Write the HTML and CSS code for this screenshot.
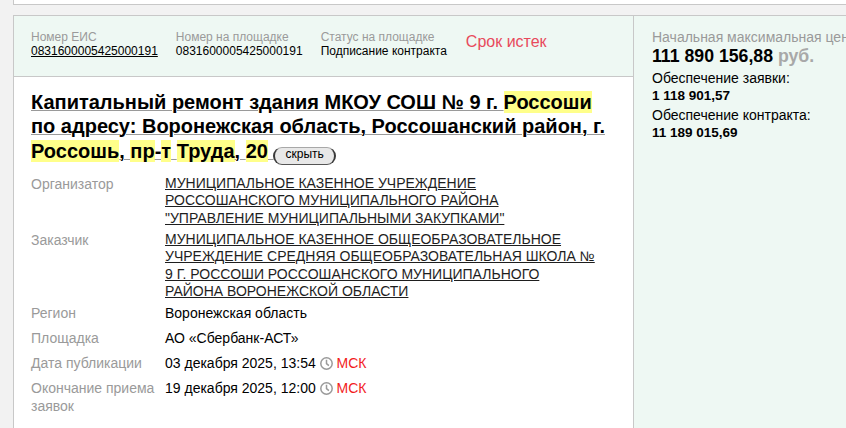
FILE: index.html
```html
<!DOCTYPE html>
<html lang="ru">
<head>
<meta charset="utf-8">
<title>Закупка 0831600005425000191</title>
<link rel="stylesheet" href="styles.css">
</head>
<body>
<div class="page">
  <div class="prev-card"></div>
  <div class="card">
    <div class="main">
      <div class="head">
        <div class="head-item">
          <div class="head-label">Номер ЕИС</div>
          <a class="head-value head-link" href="#">0831600005425000191</a>
        </div>
        <div class="head-item">
          <div class="head-label">Номер на площадке</div>
          <div class="head-value">0831600005425000191</div>
        </div>
        <div class="head-item">
          <div class="head-label">Статус на площадке</div>
          <div class="head-value">Подписание контракта</div>
        </div>
        <div class="status-expired">Срок истек</div>
      </div>
      <div class="body">
        <h1 class="title"><a class="title-link" href="#">Капитальный ремонт здания МКОУ СОШ № 9 г. <span class="hl">Россоши</span> по адресу: Воронежская область, Россошанский район, г. <span class="hl">Россошь</span>, <span class="hl">пр</span>-<span class="hl">т</span> <span class="hl">Труда</span>, <span class="hl">20</span> <button class="toggle" type="button">скрыть</button></a></h1>
        <div class="details">
          <div class="row row-link">
            <div class="row-label">Организатор</div>
            <div class="row-value"><a class="org-link" href="#">МУНИЦИПАЛЬНОЕ КАЗЕННОЕ УЧРЕЖДЕНИЕ РОССОШАНСКОГО МУНИЦИПАЛЬНОГО РАЙОНА "УПРАВЛЕНИЕ МУНИЦИПАЛЬНЫМИ ЗАКУПКАМИ"</a></div>
          </div>
          <div class="row row-link">
            <div class="row-label">Заказчик</div>
            <div class="row-value"><a class="org-link" href="#">МУНИЦИПАЛЬНОЕ КАЗЕННОЕ ОБЩЕОБРАЗОВАТЕЛЬНОЕ УЧРЕЖДЕНИЕ СРЕДНЯЯ ОБЩЕОБРАЗОВАТЕЛЬНАЯ ШКОЛА № 9 Г. РОССОШИ РОССОШАНСКОГО МУНИЦИПАЛЬНОГО РАЙОНА ВОРОНЕЖСКОЙ ОБЛАСТИ</a></div>
          </div>
          <div class="row">
            <div class="row-label">Регион</div>
            <div class="row-value">Воронежская область</div>
          </div>
          <div class="row">
            <div class="row-label">Площадка</div>
            <div class="row-value">АО «Сбербанк-АСТ»</div>
          </div>
          <div class="row">
            <div class="row-label">Дата публикации</div>
            <div class="row-value">03 декабря 2025, 13:54 <svg class="clock" width="13" height="13" viewBox="0 0 13 13"><circle cx="6.5" cy="6.5" r="5.7" fill="none" stroke="#9a9a9a" stroke-width="1.5"/><path d="M6.5 2.8V6.7L8.9 8.6" fill="none" stroke="#9a9a9a" stroke-width="1.5"/></svg> <span class="tz">МСК</span></div>
          </div>
          <div class="row">
            <div class="row-label">Окончание приема заявок</div>
            <div class="row-value">19 декабря 2025, 12:00 <svg class="clock" width="13" height="13" viewBox="0 0 13 13"><circle cx="6.5" cy="6.5" r="5.7" fill="none" stroke="#9a9a9a" stroke-width="1.5"/><path d="M6.5 2.8V6.7L8.9 8.6" fill="none" stroke="#9a9a9a" stroke-width="1.5"/></svg> <span class="tz">МСК</span></div>
          </div>
        </div>
      </div>
    </div>
    <div class="side">
      <div class="side-label">Начальная максимальная цена</div>
      <div class="price">111 890 156,88 <span class="currency">руб.</span></div>
      <div class="sec">
        <div class="sec-label">Обеспечение заявки:</div>
        <div class="sec-amount">1 118 901,57</div>
      </div>
      <div class="sec">
        <div class="sec-label">Обеспечение контракта:</div>
        <div class="sec-amount">11 189 015,69</div>
      </div>
    </div>
  </div>
</div>
</body>
</html>
```

FILE: styles.css
```css
html {
  overflow: hidden;
}

body {
  margin: 0;
  background: #f2f2f2;
  font-family: "Liberation Sans", Arial, sans-serif;
  color: #000;
}

.page {
  width: 1000px;
  padding-left: 13px;
}

.prev-card {
  height: 4px;
  background: #fff;
  border-left: 1px solid #c8c8c8;
  border-bottom: 1px solid #c8c8c8;
  margin-bottom: 10px;
}

.card {
  display: flex;
  border-top: 1px solid #c8c8c8;
  border-left: 1px solid #c8c8c8;
  min-height: 440px;
}

.main {
  width: 619px;
  flex: none;
  background: #fff;
}

.head {
  display: flex;
  gap: 18px;
  align-items: flex-start;
  background: #eef8f3;
  border-bottom: 1px solid #c8c8c8;
  padding: 13.5px 17px 18px;
  font-size: 12px;
  line-height: 14px;
}

.head-label {
  color: #9a9a9a;
}

.head-value {
  display: block;
  color: #000;
}

.head-link {
  text-decoration: underline;
}

.status-expired {
  margin-top: 3px;
  margin-left: 1px;
  font-size: 16px;
  line-height: 18px;
  color: #e84a5c;
}

.body {
  padding: 13px 17px 20px;
}

.title {
  margin: 0;
  font-size: 20px;
  line-height: 24.5px;
  font-weight: bold;
}

.title-link {
  color: #000;
  text-decoration: underline;
  text-decoration-color: #9a9a9a;
  text-decoration-thickness: 1px;
}

.hl {
  display: inline-block;
  background: #ffff8a;
  line-height: 22px;
}

.toggle {
  display: inline-block;
  font-family: "Liberation Sans", Arial, sans-serif;
  font-size: 12px;
  line-height: 13px;
  color: #000;
  padding: 0 10px 3px;
  background: #e8e8e8;
  border-style: solid;
  border-width: 1px 2px 1px 2px;
  border-color: #a8a8a8 #3a3a3a #555 #3a3a3a;
  border-radius: 9px;
  vertical-align: baseline;
}

.details {
  margin-top: 10.5px;
  font-size: 14px;
}

.row {
  display: flex;
  margin-bottom: 7px;
  line-height: 18px;
}

.row-link {
  margin-bottom: 3.8px;
}

.row-label {
  width: 130px;
  flex: none;
  padding-right: 4px;
  color: #9a9a9a;
  line-height: 18px;
}

.row-value {
  width: 434px;
}

.row-link .row-value {
  line-height: 17.4px;
}

.org-link {
  color: #1e1e1e;
  text-decoration: underline;
}

.clock {
  vertical-align: -2px;
}

.tz {
  color: #f21d1d;
}

.side {
  width: 300px;
  flex: none;
  background: #eef8f3;
  border-left: 1px solid #c8c8c8;
  padding: 12.6px 18px 0;
  font-size: 14px;
  line-height: 17px;
  white-space: nowrap;
}

.side-label {
  color: #9a9a9a;
}

.price {
  font-size: 17.7px;
  line-height: 21px;
  font-weight: bold;
  margin-bottom: 3px;
}

.currency {
  color: #a8a8a8;
}

.sec {
  margin-bottom: 3.5px;
}

.sec-amount {
  font-size: 13.5px;
  font-weight: bold;
}
```
